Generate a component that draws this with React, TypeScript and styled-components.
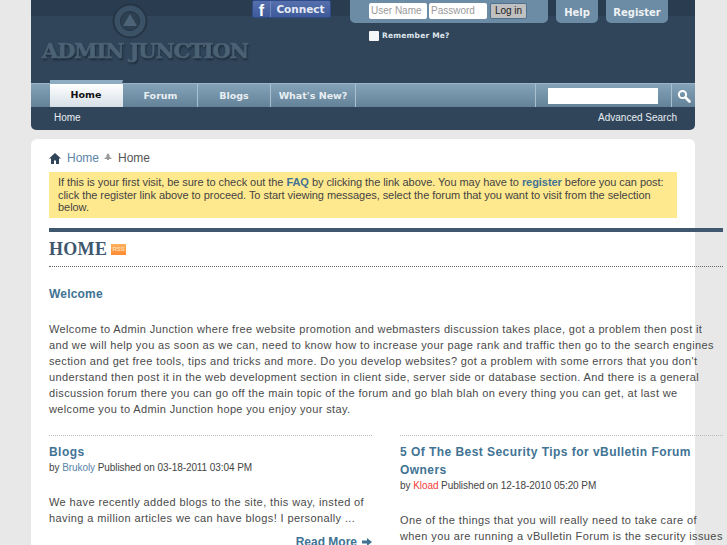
import React, { FC } from 'react';
import styled, { createGlobalStyle } from 'styled-components';

const Global = createGlobalStyle`
  html, body {
    margin: 0;
    height: 545px;
    overflow: hidden;
    background: #e8e8e8;
    font-family: "Liberation Sans", Arial, sans-serif;
    color: #3e3e3e;
  }
`;

const Page = styled.div`
  width: 664px;
  margin-left: 31px;
`;

const Header = styled.header`
  background: #30455a;
  border-radius: 0 0 5px 5px;
  height: 130px;
  display: flex;
  flex-direction: column;
`;

const TopArea = styled.div`
  height: 83px;
  background: linear-gradient(#2a3d50 0, #2a3d50 16px, #30455a 16px);
  display: flex;
`;

const LogoBlock = styled.div`
  width: 221px;
  padding: 3px 0 0 11px;
  box-sizing: border-box;
  display: flex;
  flex-direction: column;
  align-items: flex-start;
`;

const LogoMark = styled.svg`
  width: 36px;
  height: 36px;
  margin-left: 70px;
  display: block;
  flex: none;
  filter: blur(0.4px);
`;

const LogoText = styled.div`
  font-family: "DejaVu Serif", serif;
  font-weight: 700;
  font-size: 21px;
  line-height: 20px;
  white-space: nowrap;
  color: #4b6174;
  -webkit-text-stroke: 0.7px #4b6174;
  letter-spacing: -1.1px;
  text-shadow: 0 0 1px #1f2e3c, 1px 2px 2px #1c2a38;
  margin-top: 2px;
  filter: blur(0.4px);
`;

const FbButton = styled.div`
  height: 18px;
  width: 79px;
  box-sizing: border-box;
  display: flex;
  border-radius: 2px;
  background: linear-gradient(#5670ad, #3e5a9a);
  border: 1px solid #2f4a88;
  color: #e6ebf5;
`;

const FbIcon = styled.span`
  width: 17px;
  text-align: center;
  font: 700 16px/20px "Liberation Sans", sans-serif;
  color: #fff;
  border-right: 1px solid #6f86bb;
`;

const FbLabel = styled.span`
  flex: 1;
  text-align: center;
  font: 700 10.5px/16px "DejaVu Sans", sans-serif;
`;

const LoginColumn = styled.div`
  margin-left: 19px;
  width: 198px;
`;

const LoginPanel = styled.div`
  height: 23px;
  background: #6c8ba4;
  border-radius: 0 0 5px 5px;
  display: flex;
  gap: 2px;
  padding: 0 0 0 19px;
  align-items: flex-start;
`;

const Field = styled.div`
  width: 58px;
  height: 16px;
  margin-top: 3px;
  background: #fff;
  border-radius: 2px;
  color: #9a9a9a;
  font-size: 10px;
  line-height: 15px;
  padding-left: 2px;
  box-sizing: border-box;
`;

const LoginButton = styled.div`
  width: 37px;
  height: 16px;
  margin: 3px 0 0 1px;
  box-sizing: border-box;
  background: #c0c0c0;
  border: 1px solid #50708f;
  border-radius: 2px;
  color: #222;
  font-size: 10px;
  line-height: 14px;
  text-align: center;
`;

const Remember = styled.div`
  display: flex;
  align-items: center;
  gap: 3px;
  padding: 7px 0 0 19px;
  color: #dfe6ec;
  font: 700 7.5px/11px "DejaVu Sans", sans-serif;
  letter-spacing: 0.2px;
`;

const Check = styled.span`
  width: 10px;
  height: 10px;
  background: #f4f6f8;
  border-radius: 1px;
`;

const TopLink = styled.div<{ $w: number; $ml: number }>`
  width: ${(p) => p.$w}px;
  margin-left: ${(p) => p.$ml}px;
  height: 23px;
  background: #6c8ba4;
  border-radius: 0 0 5px 5px;
  color: #eef2f5;
  text-align: center;
  font: 700 10px/26px "DejaVu Sans", sans-serif;
`;

const Nav = styled.nav`
  height: 24px;
  background: linear-gradient(#84a3b9, #638197);
  border-top: 1px solid #9ab4c6;
  box-sizing: border-box;
  display: flex;
  padding-left: 19px;
`;

const Tab = styled.div<{ $active?: boolean; $w: number }>`
  width: ${(p) => p.$w}px;
  box-sizing: border-box;
  text-align: center;
  font: 700 9.5px/23px "DejaVu Sans", sans-serif;
  color: ${(p) => (p.$active ? '#111' : '#e8eef2')};
  background: ${(p) => (p.$active ? 'linear-gradient(#fff, #d5dfe6)' : 'transparent')};
  border-right: 1px solid ${(p) => (p.$active ? 'transparent' : '#a8c0d0')};
  ${(p) => p.$active && `
    height: 27px;
    margin-top: -4px;
    border-top: 4px solid #8fadc2;
    line-height: 22px;
    margin-right: 1px;
  `}
`;

const NavSearch = styled.div`
  margin-left: auto;
  display: flex;
  height: 100%;
`;

const SearchCell = styled.div`
  width: 137px;
  box-sizing: border-box;
  border-left: 1px solid #a8c0d0;
  border-right: 1px solid #a8c0d0;
  padding: 4px 0 0 12px;
`;

const SearchInput = styled.div`
  width: 110px;
  height: 16px;
  background: #fff;
`;

const SearchIcon = styled.div`
  width: 23px;
  display: flex;
  align-items: center;
  justify-content: center;
`;

const SubBar = styled.div`
  flex: 1;
  display: flex;
  justify-content: space-between;
  color: #e8eef2;
  font-size: 10px;
  line-height: 22px;
  padding: 0 18px 0 23px;
`;

const Card = styled.main`
  margin-top: 9px;
  background: #fff;
  border-radius: 6px 6px 0 0;
  padding: 12px 0 0 18px;
  height: 406px;
  box-sizing: border-box;
`;

const Crumbs = styled.div`
  display: flex;
  align-items: center;
  font-size: 12px;
  line-height: 14px;
  color: #555;
`;

const CrumbLink = styled.span`
  color: #5a84a8;
  margin-left: 6px;
`;

const CrumbSep = styled.svg`
  width: 8px;
  height: 10px;
  margin: 0 6px 0 5px;
`;

const Notice = styled.div`
  margin-top: 7px;
  width: 628px;
  box-sizing: border-box;
  background: #ffe98e;
  padding: 4px 9px;
  font-size: 11px;
  line-height: 12.6px;
  letter-spacing: -0.05px;
  color: #444;
`;

const StrongLink = styled.b`
  color: #417394;
`;

const Inner = styled.div`
  width: 674px;
`;

const HeadBar = styled.div`
  margin-top: 10px;
  height: 4px;
  background: #3f5870;
`;

const PageTitle = styled.h1`
  margin: 0;
  height: 34px;
  display: flex;
  align-items: center;
  gap: 4px;
  border-bottom: 1px dotted #666;
  font: 700 18px/34px "Liberation Serif", serif;
  letter-spacing: 0.3px;
  color: #3f5870;
`;

const Rss = styled.span`
  width: 15px;
  height: 11px;
  margin-top: 1px;
  background: linear-gradient(#ffb060, #ff8a30);
  color: #ffdcb0;
  font: 700 6px/11px "Liberation Sans", sans-serif;
  letter-spacing: 0;
  text-align: center;
`;

const SectionTitle = styled.h2`
  margin: 19px 0 0;
  font-size: 12px;
  line-height: 17px;
  color: #417394;
  letter-spacing: 0.2px;
`;

const Paragraph = styled.p`
  margin: 18px 0 0;
  font-size: 11px;
  line-height: 16px;
  letter-spacing: 0.36px;
  color: #4a4a4a;
`;

const Columns = styled.div`
  margin-top: 18px;
  display: grid;
  grid-template-columns: 323px 323px;
  column-gap: 28px;
`;

const Column = styled.article`
  border-top: 1px dotted #bbb;
  padding-top: 7px;
`;

const ArticleTitle = styled.h3`
  margin: 0;
  font-size: 12px;
  line-height: 18px;
  color: #417394;
  letter-spacing: 0.45px;
`;

const Meta = styled.div`
  font-size: 10px;
  line-height: 16px;
  letter-spacing: -0.07px;
  color: #444;
  margin-top: -1px;
`;

const Author = styled.span<{ $color: string }>`
  color: ${(p) => p.$color};
`;

const Body = styled.p`
  margin: 18px 0 0;
  font-size: 11px;
  line-height: 16.5px;
  letter-spacing: 0.39px;
  color: #4a4a4a;
`;

const ReadMore = styled.div`
  margin-top: 7px;
  display: flex;
  justify-content: flex-end;
  align-items: center;
  gap: 5px;
  font-size: 12px;
  font-weight: 700;
  line-height: 16px;
  color: #417394;
`;

const App: FC = () => (
  <Page>
    <Global />
    <Header>
      <TopArea>
        <LogoBlock>
          <LogoMark viewBox="0 0 36 36">
            <circle cx="18" cy="18" r="16.5" fill="#3a5166" stroke="#253545" strokeWidth="2" />
            <circle cx="18" cy="18" r="9.5" fill="#2c4052" stroke="#253545" />
            <path d="M18 11l7 12H11z" fill="#4d6478" />
          </LogoMark>
          <LogoText>ADMIN JUNCTION</LogoText>
        </LogoBlock>
        <FbButton>
          <FbIcon>f</FbIcon>
          <FbLabel>Connect</FbLabel>
        </FbButton>
        <LoginColumn>
          <LoginPanel>
            <Field>User Name</Field>
            <Field>Password</Field>
            <LoginButton>Log in</LoginButton>
          </LoginPanel>
          <Remember>
            <Check />
            Remember Me?
          </Remember>
        </LoginColumn>
        <TopLink $w={42} $ml={8}>Help</TopLink>
        <TopLink $w={62} $ml={8}>Register</TopLink>
      </TopArea>
      <Nav>
        <Tab $active $w={73}>Home</Tab>
        <Tab $w={74}>Forum</Tab>
        <Tab $w={73}>Blogs</Tab>
        <Tab $w={85}>What&apos;s New?</Tab>
        <NavSearch>
          <SearchCell><SearchInput /></SearchCell>
          <SearchIcon>
            <svg width="14" height="14" viewBox="0 0 14 14">
              <circle cx="5.5" cy="5.5" r="3.6" fill="none" stroke="#fff" strokeWidth="2" />
              <path d="M8.5 8.5L12.5 12.5" stroke="#fff" strokeWidth="2.6" strokeLinecap="round" />
            </svg>
          </SearchIcon>
        </NavSearch>
      </Nav>
      <SubBar>
        <span>Home</span>
        <span>Advanced Search</span>
      </SubBar>
    </Header>
    <Card>
      <Crumbs>
        <svg width="12" height="11" viewBox="0 0 12 11">
          <path d="M6 0L0 5.5h2V11h3V7.5h2V11h3V5.5h2z" fill="#30455a" />
        </svg>
        <CrumbLink>Home</CrumbLink>
        <CrumbSep viewBox="0 0 8 10">
          <path d="M4 0l2 3H5l3 3H5v1H3V6H0l3-3H2z" fill="#999" />
        </CrumbSep>
        Home
      </Crumbs>
      <Notice>
        If this is your first visit, be sure to check out the <StrongLink>FAQ</StrongLink> by clicking the link above. You may have to <StrongLink>register</StrongLink> before you can post: click the register link above to proceed. To start viewing messages, select the forum that you want to visit from the selection below.
      </Notice>
      <Inner>
        <HeadBar />
        <PageTitle>
          HOME
          <Rss>RSS</Rss>
        </PageTitle>
        <SectionTitle>Welcome</SectionTitle>
        <Paragraph>
          Welcome to Admin Junction where free website promotion and webmasters discussion takes place, got a problem then post it and we will help you as soon as we can, need to know how to increase your page rank and traffic then go to the search engines section and get free tools, tips and tricks and more. Do you develop websites? got a problem with some errors that you don&apos;t understand then post it in the web development section in client side, server side or database section. And there is a general discussion forum there you can go off the main topic of the forum and go blah blah on every thing you can get, at last we welcome you to Admin Junction hope you enjoy your stay.
        </Paragraph>
        <Columns>
          <Column>
            <ArticleTitle>Blogs</ArticleTitle>
            <Meta>by <Author $color="#5a84a8">Brukoly</Author> Published on 03-18-2011 03:04 PM</Meta>
            <Body>We have recently added blogs to the site, this way, insted of having a million articles we can have blogs! I personally ...</Body>
            <ReadMore>
              Read More
              <svg width="10" height="8" viewBox="0 0 10 8">
                <path d="M0 2.5h5V0l5 4-5 4V5.500H0z" fill="#417394" />
              </svg>
            </ReadMore>
          </Column>
          <Column>
            <ArticleTitle>5 Of The Best Security Tips for vBulletin Forum Owners</ArticleTitle>
            <Meta>by <Author $color="#f03c3c">Kload</Author> Published on 12-18-2010 05:20 PM</Meta>
            <Body>One of the things that you will really need to take care of when you are running a vBulletin Forum is the security issues</Body>
          </Column>
        </Columns>
      </Inner>
    </Card>
  </Page>
);

export default App;
